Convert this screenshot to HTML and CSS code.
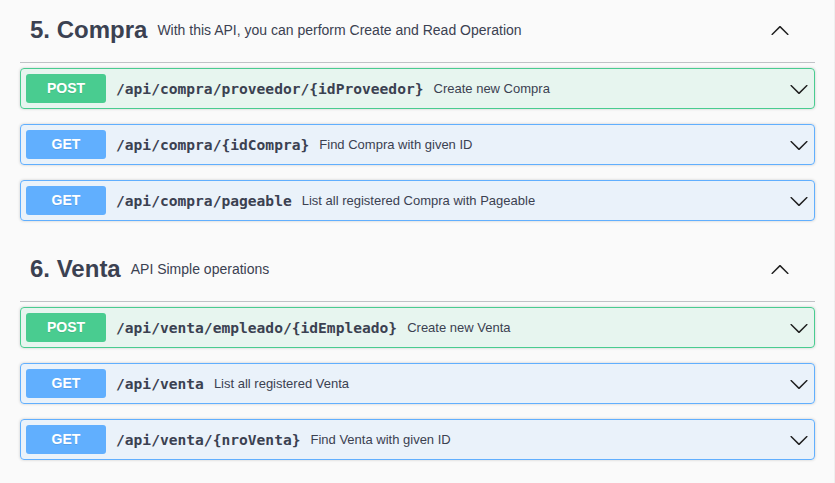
FILE: index.html
```html
<!DOCTYPE html>
<html lang="en">
<head>
<meta charset="utf-8">
<title>API</title>
<link rel="stylesheet" href="styles.css">
</head>
<body>
<div class="wrapper">
  <section class="tag-section">
    <div class="tag">
      <h3 class="tag-title">5. Compra</h3>
      <small class="tag-desc">With this API, you can perform Create and Read Operation</small>
      <svg class="arrow" viewBox="0 0 20 20" width="20" height="20"><path d="M17.418 14.908c.272.268.709.268.979 0s.271-.701 0-.969l-7.908-7.83c-.27-.268-.707-.268-.979 0l-7.908 7.83c-.27.268-.27.701 0 .969.271.268.709.268.979 0L10 7.767l7.418 7.141z"/></svg>
    </div>
    <div class="opblock post">
      <div class="summary">
        <span class="method">POST</span>
        <span class="path">/api/compra/proveedor/{idProveedor}</span>
        <span class="desc">Create new Compra</span>
        <svg class="arrow" viewBox="0 0 20 20" width="20" height="20"><path d="M17.418 6.109c.272-.268.709-.268.979 0s.271.701 0 .969l-7.908 7.83c-.27.268-.707.268-.979 0l-7.908-7.830c-.27-.268-.27-.701 0-.969.271-.268.709-.268.979 0L10 13.25l7.418-7.141z"/></svg>
      </div>
    </div>
    <div class="opblock get">
      <div class="summary">
        <span class="method">GET</span>
        <span class="path">/api/compra/{idCompra}</span>
        <span class="desc">Find Compra with given ID</span>
        <svg class="arrow" viewBox="0 0 20 20" width="20" height="20"><path d="M17.418 6.109c.272-.268.709-.268.979 0s.271.701 0 .969l-7.908 7.83c-.27.268-.707.268-.979 0l-7.908-7.83c-.27-.268-.27-.701 0-.969.271-.268.709-.268.979 0L10 13.25l7.418-7.141z"/></svg>
      </div>
    </div>
    <div class="opblock get">
      <div class="summary">
        <span class="method">GET</span>
        <span class="path">/api/compra/pageable</span>
        <span class="desc">List all registered Compra with Pageable</span>
        <svg class="arrow" viewBox="0 0 20 20" width="20" height="20"><path d="M17.418 6.109c.272-.268.709-.268.979 0s.271.701 0 .969l-7.908 7.83c-.27.268-.707.268-.979 0l-7.908-7.83c-.27-.268-.27-.701 0-.969.271-.268.709-.268.979 0L10 13.25l7.418-7.141z"/></svg>
      </div>
    </div>
  </section>
  <section class="tag-section">
    <div class="tag">
      <h3 class="tag-title">6. Venta</h3>
      <small class="tag-desc">API Simple operations</small>
      <svg class="arrow" viewBox="0 0 20 20" width="20" height="20"><path d="M17.418 14.908c.272.268.709.268.979 0s.271-.701 0-.969l-7.908-7.83c-.27-.268-.707-.268-.979 0l-7.908 7.83c-.27.268-.27.701 0 .969.271.268.709.268.979 0L10 7.767l7.418 7.141z"/></svg>
    </div>
    <div class="opblock post">
      <div class="summary">
        <span class="method">POST</span>
        <span class="path">/api/venta/empleado/{idEmpleado}</span>
        <span class="desc">Create new Venta</span>
        <svg class="arrow" viewBox="0 0 20 20" width="20" height="20"><path d="M17.418 6.109c.272-.268.709-.268.979 0s.271.701 0 .969l-7.908 7.83c-.27.268-.707.268-.979 0l-7.908-7.83c-.27-.268-.27-.701 0-.969.271-.268.709-.268.979 0L10 13.25l7.418-7.141z"/></svg>
      </div>
    </div>
    <div class="opblock get">
      <div class="summary">
        <span class="method">GET</span>
        <span class="path">/api/venta</span>
        <span class="desc">List all registered Venta</span>
        <svg class="arrow" viewBox="0 0 20 20" width="20" height="20"><path d="M17.418 6.109c.272-.268.709-.268.979 0s.271.701 0 .969l-7.908 7.83c-.27.268-.707.268-.979 0l-7.908-7.83c-.27-.268-.27-.701 0-.969.271-.268.709-.268.979 0L10 13.25l7.418-7.141z"/></svg>
      </div>
    </div>
    <div class="opblock get">
      <div class="summary">
        <span class="method">GET</span>
        <span class="path">/api/venta/{nroVenta}</span>
        <span class="desc">Find Venta with given ID</span>
        <svg class="arrow" viewBox="0 0 20 20" width="20" height="20"><path d="M17.418 6.109c.272-.268.709-.268.979 0s.271.701 0 .969l-7.908 7.83c-.27.268-.707.268-.979 0l-7.908-7.83c-.27-.268-.27-.701 0-.969.271-.268.709-.268.979 0L10 13.25l7.418-7.141z"/></svg>
      </div>
    </div>
  </section>
</div>
</body>
</html>
```
FILE: styles.css
```css
html, body {
  margin: 0;
  padding: 0;
  background: #fafafa;
}
body {
  min-height: 100vh;
  font-family: "Liberation Sans", Arial, sans-serif;
  color: #3b4151;
  box-shadow: inset -1px 0 0 #efefef;
  overflow: hidden;
}
.wrapper {
  padding: 0 20px;
  margin-top: -3px;
}
.tag-section {
  display: flex;
  flex-direction: column;
}
.tag {
  display: flex;
  align-items: center;
  height: 65px;
  padding: 0 25px 0 10px;
  margin-bottom: 5px;
  border-bottom: 1px solid rgba(59, 65, 81, 0.3);
}
.tag-title {
  margin: 0;
  font-size: 24px;
  font-weight: 700;
  color: #3b4151;
}
.tag-desc {
  flex: 1;
  padding: 0 10px;
  font-size: 14px;
  color: #3b4151;
}
.arrow {
  flex: none;
  fill: #1f1f1f;
  display: block;
}
.opblock {
  border: 1px solid;
  border-radius: 4px;
  margin-bottom: 15px;
  box-shadow: 0 0 3px rgba(0, 0, 0, 0.19);
}
.opblock.post {
  background: rgba(73, 204, 144, 0.1);
  border-color: #49cc90;
}
.opblock.get {
  background: rgba(97, 175, 254, 0.1);
  border-color: #61affe;
}
.summary {
  display: flex;
  align-items: center;
  padding: 5px;
}
.method {
  min-width: 80px;
  padding: 6px 0;
  line-height: 17px;
  font-size: 14px;
  font-weight: 700;
  text-align: center;
  color: #fff;
  border-radius: 3px;
  text-shadow: 0 1px 0 rgba(0, 0, 0, 0.1);
}
.post .method { background: #49cc90; }
.get .method { background: #61affe; }
.path {
  padding: 0 10px;
  font-family: "DejaVu Sans Mono", "Liberation Mono", monospace;
  font-weight: 700;
  font-size: 14.6px;
  color: #3b4151;
}
.desc {
  flex: 1;
  font-size: 13px;
  color: #3b4151;
}
```
